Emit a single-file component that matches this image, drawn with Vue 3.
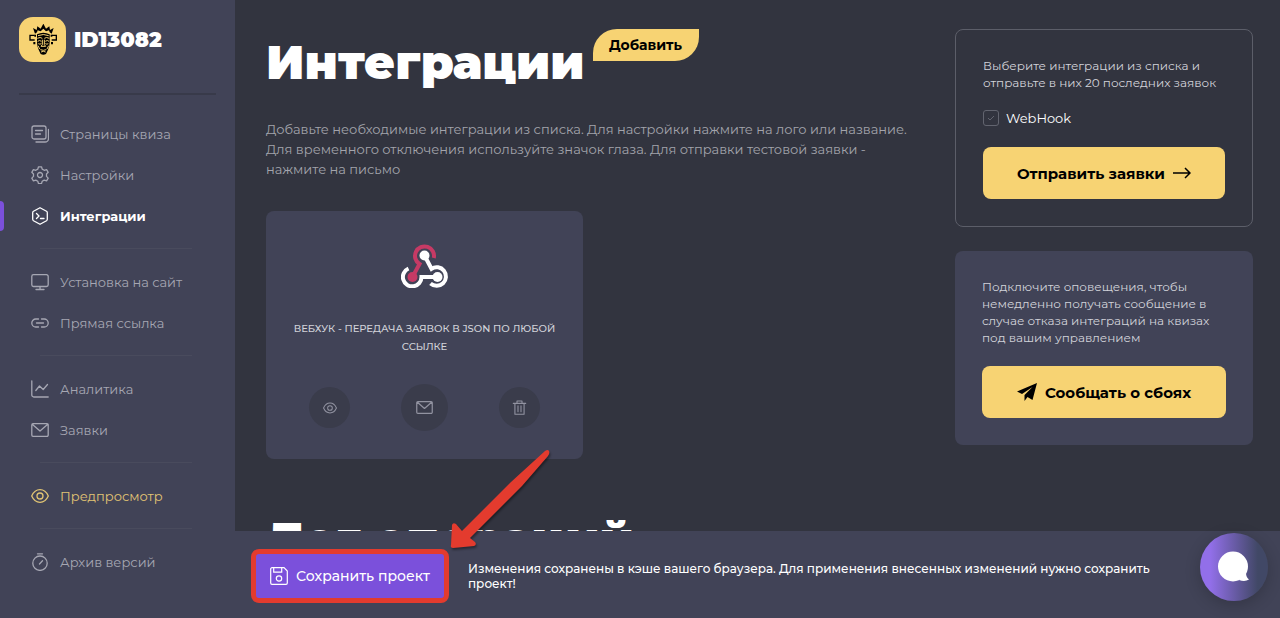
<script setup>
import { ref } from 'vue'

const groups = [
  [
    { label: 'Страницы квиза', icon: 'pages' },
    { label: 'Настройки', icon: 'gear' },
    { label: 'Интеграции', icon: 'hex', active: true },
  ],
  [
    { label: 'Установка на сайт', icon: 'monitor' },
    { label: 'Прямая ссылка', icon: 'link' },
  ],
  [
    { label: 'Аналитика', icon: 'chart' },
    { label: 'Заявки', icon: 'mail' },
  ],
  [{ label: 'Предпросмотр', icon: 'eye', accent: true }],
  [{ label: 'Архив версий', icon: 'timer' }],
]

const icons = {
  pages: 'M3 1h10a2 2 0 0 1 2 2v9a2 2 0 0 1-2 2H3a2 2 0 0 1-2-2V3a2 2 0 0 1 2-2zM4.500 5.500h7M4.500 9h5M17.500 4.500v9a3.500 3.500 0 0 1-3.500 3.500H5',
  gear: 'M7.500 .8h3l.7 2.300 2 1.200 2.400-.7 1.600 2.700-1.700 1.700v2.400l1.700 1.700-1.600 2.700-2.400-.7-2 1.200-.7 2.300h-3l-.7-2.300-2-1.200-2.400.7L.8 12.100l1.700-1.700V8L.8 6.300l1.600-2.700 2.400.7 2-1.200zM11.500 9a2.500 2.500 0 1 1-5 0a2.500 2.500 0 1 1 5 0z',
  hex: 'M9 .7l6.500 3.600q.8.500.8 1.400v6.600q0 .9-.8 1.400L9 17.300l-6.500-3.600q-.8-.5-.8-1.400V5.700q0-.9.8-1.400zM5.500 6.500L8 9l-2.500 2.500M9.500 11.500h3.500',
  monitor: 'M2.500 1.700h13a1.700 1.700 0 0 1 1.700 1.700v8.400a1.700 1.700 0 0 1-1.700 1.700h-13A1.700 1.700 0 0 1 .8 11.800V3.400a1.700 1.700 0 0 1 1.700-1.700zM9 13.500v3M5 16.500h8',
  link: 'M7.500 5H4.800a4 4 0 0 0 0 8h2.700M10.500 5h2.700a4 4 0 0 1 0 8h-2.700M5.500 9h7',
  chart: 'M.8 .8v14.200a2 2 0 0 0 2 2h14.400M4.800 10.500l3.700-4.500 3.700 3.500 4.300-5',
  mail: 'M2 2.700h14a1.200 1.200 0 0 1 1.200 1.200v10.200a1.200 1.200 0 0 1-1.200 1.200H2A1.200 1.200 0 0 1 .8 14.100V3.900A1.200 1.200 0 0 1 2 2.700zM1.500 3.500L9 10l7.500-6.500',
  eye: 'M.7 9C2.500 5 5.500 2.700 9 2.700S15.500 5 17.300 9C15.500 13 12.500 15.300 9 15.300S2.500 13 .7 9zM12 9a3 3 0 1 1-6 0a3 3 0 1 1 6 0z',
  timer: 'M16.200 10.200a7.200 7.200 0 1 1-14.400 0a7.200 7.200 0 1 1 14.400 0zM6.500 .8h5M8.500 11l3-3.200',
  trash: 'M1.500 4h15M6 4V1.200h6V4M3.500 4v13h11V4M7.200 7v7M10.800 7v7',
}

const webhook = ref(false)
</script>

<template>
  <div class="shell">
    <aside class="sidebar">
      <a class="brand" href="#">
        <span class="logo">
          <svg viewBox="84 72 84 93" width="28" height="31" aria-hidden="true">
            <path d="M102 101l-6-17 11 6 2-11 10 7 8-15 8 15 10-7 2 11 11-6-6 17-6-4-2-6-9 3-8-8-8 8-9-3-2 6z" />
            <path d="M108 103q19-10 38 0v24q0 14-5 22l-6 13q-8 4-16 0l-6-13q-5-8-5-22z" />
            <g fill="none" stroke="#000" stroke-width="4"><path d="M101 106H87v14h14M152 106h14v14h-14" /></g>
            <path d="M97 126h6v7h-6zM150 126h6v7h-6zM100 104h5v6h-5zM149 104h5v6h-5z" />
            <g fill="none" stroke="#f7d373" stroke-width="3">
              <path d="M111 107q16-7 32 0M109 115q9-5 15 0M130 115q6-5 15 0M110 124q6-5 11 0M133 124q6-5 11 0M112 131q5 3 9 0M133 131q5 3 9 0M124 119v15l-4 5h14l-4-5v-15M111 137l5 10M143 137l-5 10M118 149q9 4 18 0M120 156q7-4 14 0" />
            </g>
          </svg>
        </span>
        <span class="brand-name">ID13082</span>
      </a>
      <nav class="nav">
        <ul v-for="(group, g) in groups" :key="g">
          <li v-for="item in group" :key="item.label">
            <a href="#" :class="{ active: item.active, accent: item.accent }">
              <svg class="line" viewBox="0 0 18 18" width="18" height="18" aria-hidden="true"><path :d="icons[item.icon]" /></svg>
              {{ item.label }}
            </a>
          </li>
        </ul>
      </nav>
    </aside>

    <div class="workspace">
      <main class="content">
        <section class="primary">
          <header class="title-row">
            <h1>Интеграции</h1>
            <button class="add" type="button">Добавить</button>
          </header>
          <p class="intro">Добавьте необходимые интеграции из списка. Для настройки нажмите на лого или название. Для временного отключения используйте значок глаза. Для отправки тестовой заявки - нажмите на письмо</p>
          <article class="card">
            <svg viewBox="0 0 48 44" width="48" height="44" fill="none" stroke-width="4" aria-hidden="true">
              <path stroke="#c63a65" d="M32.800 14A9.500 9.500 0 1 0 18.500 20L11.500 33" />
              <circle cx="11.500" cy="33" r="5" fill="#c63a65" />
              <g stroke="#fff">
                <path d="M23.500 11.500l7 13.300A9.300 9.300 0 1 1 29.500 39.500" />
                <path d="M7.500 24.500A9.300 9.300 0 1 0 20.500 33H36.500" />
              </g>
              <circle cx="23.500" cy="11.500" r="5" fill="#fff" />
              <circle cx="36.500" cy="33" r="5" fill="#fff" />
            </svg>
            <h2>Вебхук - передача заявок в JSON по любой ссылке</h2>
            <div class="actions">
              <button type="button" aria-label="Отключить"><svg class="line" viewBox="0 0 18 18" width="14" height="14"><path :d="icons.eye" /></svg></button>
              <button type="button" class="big" aria-label="Тестовая заявка"><svg class="line" viewBox="0 0 18 18" width="17" height="17"><path :d="icons.mail" /></svg></button>
              <button type="button" aria-label="Удалить"><svg class="line" viewBox="0 0 18 18" width="15" height="15"><path :d="icons.trash" /></svg></button>
            </div>
          </article>
          <h1 class="log-title">Лог операций</h1>
        </section>

        <aside class="side">
          <section class="panel outlined">
            <p>Выберите интеграции из списка и отправьте в них 20 последних заявок</p>
            <label class="check">
              <input v-model="webhook" type="checkbox" />
              <svg viewBox="0 0 16 16" width="16" height="16" aria-hidden="true"><path d="M5 8l2 2 4-4" /></svg>
              WebHook
            </label>
            <button class="cta" type="button">
              Отправить заявки
              <svg viewBox="0 0 18 12" width="18" height="12" fill="none" stroke="#000" stroke-width="1.500" aria-hidden="true"><path d="M0 6h17M12 1l5 5-5 5" /></svg>
            </button>
          </section>
          <section class="panel filled">
            <p>Подключите оповещения, чтобы немедленно получать сообщение в случае отказа интеграций на квизах под вашим управлением</p>
            <button class="cta" type="button">
              <svg viewBox="0 0 20 18" width="20" height="18" aria-hidden="true"><path d="M20 0L0 8.500l5 2.500L15.500 4 7.500 12v6l3-4 5 3z" /></svg>
              Сообщать о сбоях
            </button>
          </section>
        </aside>
      </main>

      <footer class="savebar">
        <button class="save" type="button">
          <svg viewBox="0 0 18 18" width="18" height="18" fill="none" stroke="#fff" stroke-width="1.200" aria-hidden="true">
            <path d="M2 .7h12l3.300 3.300v12a1.300 1.300 0 0 1-1.300 1.300H2A1.300 1.300 0 0 1 .7 16V2A1.300 1.300 0 0 1 2 .7zM3.700 .7v4.500h8V.7" />
            <circle cx="9" cy="11.500" r="2.700" />
          </svg>
          Сохранить проект
        </button>
        <p>Изменения сохранены в кэше вашего браузера. Для применения внесенных изменений нужно сохранить проект!</p>
        <svg class="arrow" viewBox="0 0 102 102" width="102" height="102" aria-hidden="true">
          <path d="M96 2q3-2 4 0 1 2-1 5L73 37 21 89l5 4q2 3-1 4L4 99q-3 0-2-3L3 76q1-3 4-1l6 7 49-49z" />
        </svg>
        <button class="chat" type="button" aria-label="Чат">
          <svg viewBox="0 0 32 32" width="32" height="32" aria-hidden="true"><circle cx="15" cy="15.500" r="15" /><path d="M28 22q0 4 3 6.500-4 2.500-10 .5z" /></svg>
        </button>
      </footer>
    </div>
  </div>
</template>

<style>
body {
  background: #32343f;
}
</style>

<style scoped>
.shell {
  display: grid;
  grid-template-columns: 235px minmax(0, 1fr);
  height: 100vh;
  color: #fff;
  font-family: Montserrat, Inter, "Open Sans", sans-serif;
  font-size: 13px;
}
h1, h2, p, ul { margin: 0; padding: 0; }
li { list-style: none; }
a { color: inherit; text-decoration: none; }
button { border: 0; padding: 0; font-family: inherit; cursor: pointer; }
svg { flex: none; display: block; }
.line { fill: none; stroke: currentColor; stroke-width: 1.3; stroke-linecap: round; stroke-linejoin: round; }

.sidebar { background: #414357; overflow: hidden; }
.brand {
  display: flex;
  align-items: center;
  gap: 8px;
  margin: 0 19px;
  padding: 17px 0 31px;
  border-bottom: 2px solid #383a4a;
}
.logo {
  display: grid;
  place-items: center;
  width: 47px;
  height: 45px;
  border-radius: 14px;
  background: #f7d373;
}
.brand-name { font-size: 21px; font-weight: 900; }
.nav { padding-top: 18px; }
.nav ul + ul::before {
  content: "";
  display: block;
  height: 1px;
  margin: 12px 43px 12px 40px;
  background: #494b5d;
}
.nav a {
  display: flex;
  align-items: center;
  gap: 11px;
  height: 41px;
  padding-left: 31px;
  color: #a6a7b3;
}
.nav a.accent { color: #e2c574; }
.nav a.active { position: relative; color: #fff; font-weight: 700; }
.nav a.active::before {
  content: "";
  position: absolute;
  left: 0;
  width: 4px;
  height: 30px;
  border-radius: 0 4px 4px 0;
  background: #7b50db;
}

.workspace { display: flex; flex-direction: column; min-width: 0; height: 100vh; }
.content {
  flex: 1;
  min-height: 0;
  overflow: hidden;
  display: grid;
  grid-template-columns: minmax(0, 1fr) 298px;
  align-items: start;
  gap: 30px;
  padding: 29px 27px 0 31px;
}
.title-row { display: flex; align-items: flex-start; gap: 8px; }
h1 { font-size: 47px; line-height: 60px; font-weight: 900; padding-top: 4px; }
.add {
  width: 106px;
  height: 32px;
  border-radius: 24px 0 24px 0;
  background: #f7d373;
  font-size: 14px;
  font-weight: 700;
  color: #000;
}
.intro { max-width: 655px; margin-top: 26px; line-height: 20px; color: #a3a4ac; }
.card {
  box-sizing: border-box;
  display: flex;
  flex-direction: column;
  align-items: center;
  width: 317px;
  margin-top: 32px;
  padding: 33px 24px 28px;
  border-radius: 8px;
  background: #414357;
}
h2 {
  margin-top: 32px;
  font-size: 10px;
  line-height: 18px;
  font-weight: 500;
  text-align: center;
  text-transform: uppercase;
  color: #d2d3da;
}
.actions {
  display: flex;
  align-items: center;
  justify-content: space-between;
  align-self: stretch;
  margin: 28px 19px 0;
}
.actions button {
  display: grid;
  place-items: center;
  width: 41px;
  height: 41px;
  border-radius: 50%;
  background: #3a3c4b;
  color: #9293a1;
}
.actions .big { width: 47px; height: 47px; }
.log-title { margin-top: 51px; padding: 0; white-space: nowrap; }

.side { display: grid; gap: 24px; }
.panel { padding: 27px; border-radius: 8px; }
.panel p { font-size: 12px; line-height: 17px; color: #d2d3da; }
.outlined { border: 1px solid #5c5e69; }
.filled { background: #414357; }
.check { display: flex; align-items: center; gap: 7px; height: 20px; margin-top: 17px; }
.check input { appearance: none; width: 16px; height: 16px; margin: 0 -23px 0 0; border: 1px solid #62646f; border-radius: 3px; }
.check path { fill: none; stroke: #62646f; }
.cta {
  display: flex;
  align-items: center;
  justify-content: center;
  gap: 8px;
  width: 100%;
  height: 52px;
  margin-top: 19px;
  border-radius: 8px;
  background: #f7d373;
  color: #000;
  font-size: 15px;
  font-weight: 700;
}
.filled .cta { margin-top: 20px; }

.savebar {
  position: relative;
  box-sizing: border-box;
  display: flex;
  align-items: center;
  gap: 19px;
  height: 87px;
  padding: 2px 96px 0 16px;
  background: #414357;
}
.save {
  display: flex;
  align-items: center;
  justify-content: center;
  gap: 8px;
  flex: none;
  width: 198px;
  height: 54px;
  border: 5px solid #e33b2e;
  border-radius: 8px;
  background: #7b50db;
  color: #fff;
  font-size: 14px;
  font-weight: 500;
}
.savebar p { max-width: 710px; font-size: 12px; line-height: 15px; font-weight: 500; }
.arrow { position: absolute; left: 214px; top: -82px; fill: #e33b2e; filter: drop-shadow(1px 2px 1px #0006); }
.chat {
  position: absolute;
  right: 12px;
  top: 2px;
  display: grid;
  place-items: center;
  width: 68px;
  height: 68px;
  border-radius: 50%;
  background: linear-gradient(90deg, #926fe9 15%, #414866 85%);
  box-shadow: 0 4px 16px #0003;
}
.chat svg { fill: #fff; }
</style>
